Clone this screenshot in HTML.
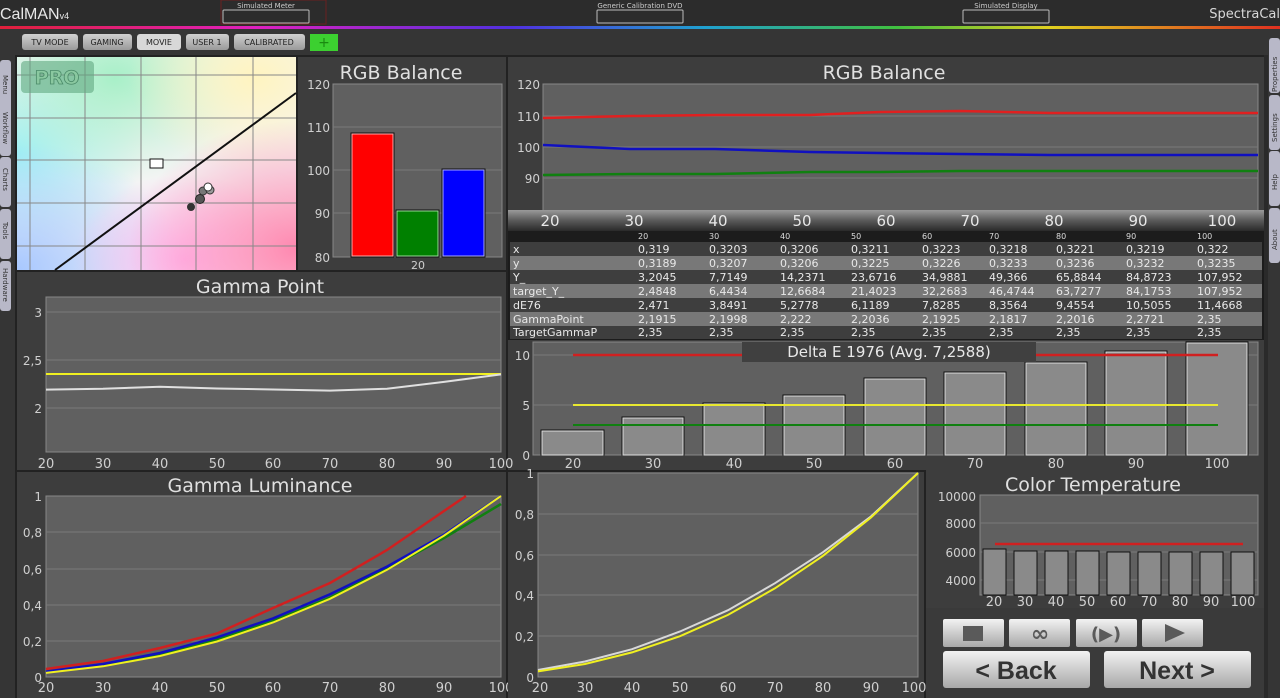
<!DOCTYPE html>
<html><head><meta charset="utf-8"><style>
html,body{margin:0;padding:0;background:#353535;width:1280px;height:698px;overflow:hidden;font-family:"Liberation Sans","DejaVu Sans",sans-serif}
svg{display:block}
</style></head><body>
<svg width="1280" height="698" viewBox="0 0 1280 698" xmlns="http://www.w3.org/2000/svg" font-family="DejaVu Sans, Liberation Sans, sans-serif">
<defs>
<linearGradient id="rainbow" x1="0" x2="1">
<stop offset="0" stop-color="#e0203a"/><stop offset="0.2" stop-color="#e020c0"/><stop offset="0.4" stop-color="#5030e0"/><stop offset="0.55" stop-color="#20a0d0"/><stop offset="0.7" stop-color="#40c040"/><stop offset="0.82" stop-color="#e0d020"/><stop offset="1" stop-color="#e03020"/></linearGradient>
<linearGradient id="hdr" x1="0" y1="0" x2="0" y2="1"><stop offset="0" stop-color="#9a9a9a"/><stop offset="0.5" stop-color="#5a5a5a"/><stop offset="1" stop-color="#2a2a2a"/></linearGradient>
<linearGradient id="btn" x1="0" y1="0" x2="0" y2="1"><stop offset="0" stop-color="#f2f2f2"/><stop offset="1" stop-color="#a8a8a8"/></linearGradient>
<linearGradient id="tab" x1="0" y1="0" x2="0" y2="1"><stop offset="0" stop-color="#d0d0d0"/><stop offset="1" stop-color="#9a9a9a"/></linearGradient>
<radialGradient id="g1" cx="0.35" cy="0.1" r="0.5"><stop offset="0" stop-color="#a8f0c8"/><stop offset="1" stop-color="#a8f0c8" stop-opacity="0"/></radialGradient>
<radialGradient id="g2" cx="0.85" cy="0.1" r="0.45"><stop offset="0" stop-color="#fff4c0"/><stop offset="1" stop-color="#fff4c0" stop-opacity="0"/></radialGradient>
<radialGradient id="g3" cx="1" cy="0.9" r="0.6"><stop offset="0" stop-color="#ff88b0"/><stop offset="1" stop-color="#ff88b0" stop-opacity="0"/></radialGradient>
<radialGradient id="g4" cx="0" cy="1" r="0.6"><stop offset="0" stop-color="#a8c8ff"/><stop offset="1" stop-color="#a8c8ff" stop-opacity="0"/></radialGradient>
<radialGradient id="g5" cx="0" cy="0.45" r="0.45"><stop offset="0" stop-color="#9ef0f4"/><stop offset="1" stop-color="#9ef0f4" stop-opacity="0"/></radialGradient>
<radialGradient id="g6" cx="0.6" cy="0.95" r="0.4"><stop offset="0" stop-color="#ffb8f0"/><stop offset="1" stop-color="#ffb8f0" stop-opacity="0"/></radialGradient>
</defs>

<!-- top bar -->
<rect x="0" y="0" width="1280" height="27" fill="#2c2c2c"/>
<rect x="0" y="26" width="1280" height="3" fill="url(#rainbow)"/>
<text x="0" y="19" font-size="16" fill="#e8e8e8" font-family="Liberation Sans, sans-serif">CalMAN<tspan font-size="9">v4</tspan></text>
<rect x="221" y="0" width="105" height="24" fill="none" stroke="#6a2020" stroke-width="1"/>
<text x="266" y="8" font-size="7" fill="#ccc" text-anchor="middle">Simulated Meter</text>
<rect x="223" y="10" width="86" height="13" fill="none" stroke="#bbb" rx="1"/>
<text x="640" y="8" font-size="7" fill="#ccc" text-anchor="middle">Generic Calibration DVD</text>
<rect x="597" y="10" width="86" height="13" fill="none" stroke="#bbb" rx="1"/>
<text x="1006" y="8" font-size="7" fill="#ccc" text-anchor="middle">Simulated Display</text>
<rect x="963" y="10" width="86" height="13" fill="none" stroke="#bbb" rx="1"/>
<text x="1280" y="18" font-size="13" fill="#d8d8d8" text-anchor="end">SpectraCal</text>

<!-- tabs -->
<g font-size="8" fill="#222" text-anchor="middle">
<rect x="22" y="34" width="56" height="16" rx="3" fill="url(#tab)"/><text x="50" y="45">TV MODE</text>
<rect x="83" y="34" width="49" height="16" rx="3" fill="url(#tab)"/><text x="107" y="45">GAMING</text>
<rect x="137" y="34" width="44" height="16" rx="3" fill="#d8d8d8"/><text x="159" y="45">MOVIE</text>
<rect x="186" y="34" width="43" height="16" rx="3" fill="url(#tab)"/><text x="207" y="45">USER 1</text>
<rect x="234" y="34" width="71" height="16" rx="3" fill="url(#tab)"/><text x="269" y="45">CALIBRATED</text>
</g>
<rect x="310" y="34" width="28" height="17" fill="#3cd030"/><text x="324" y="47" font-size="14" fill="#1a8a10" text-anchor="middle">+</text>

<!-- side tabs -->
<g fill="#b8b8c8">
<rect x="0" y="60" width="11" height="50" rx="3"/><rect x="0" y="104" width="11" height="52" rx="3"/><rect x="0" y="157" width="11" height="50" rx="3"/><rect x="0" y="209" width="11" height="50" rx="3"/><rect x="0" y="261" width="11" height="50" rx="3"/>
<rect x="1269" y="38" width="11" height="55" rx="3"/><rect x="1269" y="95" width="11" height="55" rx="3"/><rect x="1269" y="151" width="11" height="55" rx="3"/><rect x="1269" y="208" width="11" height="55" rx="3"/>
</g>
<g font-size="7" fill="#333">
<text transform="translate(3,75) rotate(90)">Menu</text><text transform="translate(3,112) rotate(90)">Workflow</text><text transform="translate(3,168) rotate(90)">Charts</text><text transform="translate(3,222) rotate(90)">Tools</text><text transform="translate(3,268) rotate(90)">Hardware</text>
<text transform="translate(1277,92) rotate(-90)">Properties</text><text transform="translate(1277,142) rotate(-90)">Settings</text><text transform="translate(1277,190) rotate(-90)">Help</text><text transform="translate(1277,250) rotate(-90)">About</text>
</g>

<!-- main panel bg -->
<rect x="15" y="55" width="1250" height="643" fill="#222"/>

<!-- CIE -->
<rect x="17" y="57" width="279" height="213" fill="#f4f4f4"/>
<rect x="17" y="57" width="279" height="213" fill="url(#g5)"/>
<rect x="17" y="57" width="279" height="213" fill="url(#g1)"/>
<rect x="17" y="57" width="279" height="213" fill="url(#g2)"/>
<rect x="17" y="57" width="279" height="213" fill="url(#g4)"/>
<rect x="17" y="57" width="279" height="213" fill="url(#g6)"/>
<rect x="17" y="57" width="279" height="213" fill="url(#g3)"/>
<g stroke="#888" stroke-width="1">
<line x1="30" y1="57" x2="30" y2="270"/><line x1="85" y1="57" x2="85" y2="270"/><line x1="141" y1="57" x2="141" y2="270"/><line x1="196" y1="57" x2="196" y2="270"/><line x1="253" y1="57" x2="253" y2="270"/>
<line x1="17" y1="75" x2="296" y2="75"/><line x1="17" y1="118" x2="296" y2="118"/><line x1="17" y1="160" x2="296" y2="160"/><line x1="17" y1="203" x2="296" y2="203"/><line x1="17" y1="246" x2="296" y2="246"/>
</g>
<rect x="21" y="61" width="73" height="32" rx="4" fill="#60a880" opacity="0.6"/>
<text x="57" y="84" font-size="19" font-weight="bold" fill="#8ac8a0" text-anchor="middle" stroke="#4a8a68" stroke-width="0.8">PRO</text>
<line x1="55" y1="270" x2="296" y2="93" stroke="#111" stroke-width="2"/>
<rect x="150" y="159" width="13" height="9" fill="#fff" stroke="#111"/>
<circle cx="191" cy="207" r="4" fill="#333"/><circle cx="200" cy="199" r="4.5" fill="#555" stroke="#222"/><circle cx="203" cy="191" r="4" fill="#777" stroke="#333"/><circle cx="210" cy="190" r="4" fill="#999" stroke="#333"/><circle cx="208" cy="187" r="4" fill="#fff" stroke="#333"/>

<!-- small RGB balance -->
<rect x="298" y="57" width="208" height="213" fill="#3d3d3d"/>
<text x="401" y="79" font-size="19" fill="#e0e0e0" text-anchor="middle">RGB Balance</text>
<rect x="333" y="84" width="169" height="173" fill="#606060" stroke="#888"/>
<g stroke="#7a7a7a"><line x1="333" y1="127" x2="502" y2="127"/><line x1="333" y1="170" x2="502" y2="170"/><line x1="333" y1="213" x2="502" y2="213"/></g>
<g font-size="12" fill="#d0d0d0" text-anchor="end"><text x="330" y="89">120</text><text x="330" y="132">110</text><text x="330" y="175">100</text><text x="330" y="218">90</text><text x="330" y="262">80</text></g>
<rect x="351" y="133" width="43" height="124" fill="#ff0000" stroke="#111"/><rect x="352" y="134" width="41" height="122" fill="none" stroke="#ffaaaa"/>
<rect x="396" y="210" width="43" height="47" fill="#008000" stroke="#111"/><rect x="397" y="211" width="41" height="45" fill="none" stroke="#99dd99"/>
<rect x="442" y="169" width="43" height="88" fill="#0000ff" stroke="#111"/><rect x="443" y="170" width="41" height="86" fill="none" stroke="#aaaaff"/>
<text x="418" y="269" font-size="11" fill="#d0d0d0" text-anchor="middle">20</text>

<!-- big RGB balance -->
<rect x="508" y="57" width="756" height="155" fill="#3d3d3d"/>
<text x="884" y="79" font-size="19" fill="#e0e0e0" text-anchor="middle">RGB Balance</text>
<rect x="543" y="84" width="715" height="128" fill="#606060" stroke="#888"/>
<g stroke="#7a7a7a"><line x1="543" y1="116" x2="1258" y2="116"/><line x1="543" y1="147" x2="1258" y2="147"/><line x1="543" y1="178" x2="1258" y2="178"/></g>
<g font-size="12" fill="#d0d0d0" text-anchor="end"><text x="540" y="89">120</text><text x="540" y="121">110</text><text x="540" y="152">100</text><text x="540" y="183">90</text></g>
<polyline fill="none" stroke="#e02020" stroke-width="2.5" points="543,118 630,116 715,115 810,115 880,112 960,111 1050,113 1258,113"/>
<polyline fill="none" stroke="#1010c0" stroke-width="2.5" points="543,145 630,149 715,149 810,152 880,153 960,154 1050,155 1258,155"/>
<polyline fill="none" stroke="#108010" stroke-width="2.5" points="543,175 630,174 715,174 810,172 880,172 960,171 1050,171 1258,171"/>
<rect x="508" y="210" width="756" height="21" fill="url(#hdr)"/>
<g font-size="15" fill="#e8e8e8" text-anchor="middle"><text x="550" y="226">20</text><text x="634" y="226">30</text><text x="718" y="226">40</text><text x="802" y="226">50</text><text x="886" y="226">60</text><text x="970" y="226">70</text><text x="1054" y="226">80</text><text x="1138" y="226">90</text><text x="1222" y="226">100</text></g>

<!-- table -->
<rect x="508" y="231" width="756" height="109" fill="#1c1c1c"/>
<rect x="510" y="242" width="752" height="14" fill="#3e3e3e"/>
<rect x="510" y="256" width="752" height="14" fill="#787878"/>
<rect x="510" y="270" width="752" height="14" fill="#3e3e3e"/>
<rect x="510" y="284" width="752" height="14" fill="#787878"/>
<rect x="510" y="298" width="752" height="14" fill="#3e3e3e"/>
<rect x="510" y="312" width="752" height="14" fill="#787878"/>
<rect x="510" y="326" width="752" height="13" fill="#3e3e3e"/>
<g font-size="8" fill="#ddd"><text x="638" y="239">20</text><text x="709" y="239">30</text><text x="780" y="239">40</text><text x="851" y="239">50</text><text x="922" y="239">60</text><text x="989" y="239">70</text><text x="1056" y="239">80</text><text x="1126" y="239">90</text><text x="1197" y="239">100</text></g>
<g font-size="11" fill="#e8e8e8">
<text x="513" y="253">x</text><text x="638" y="253">0,319</text><text x="709" y="253">0,3203</text><text x="780" y="253">0,3206</text><text x="851" y="253">0,3211</text><text x="922" y="253">0,3223</text><text x="989" y="253">0,3218</text><text x="1056" y="253">0,3221</text><text x="1126" y="253">0,3219</text><text x="1197" y="253">0,322</text>
<text x="513" y="267">y</text><text x="638" y="267">0,3189</text><text x="709" y="267">0,3207</text><text x="780" y="267">0,3206</text><text x="851" y="267">0,3225</text><text x="922" y="267">0,3226</text><text x="989" y="267">0,3233</text><text x="1056" y="267">0,3236</text><text x="1126" y="267">0,3232</text><text x="1197" y="267">0,3235</text>
<text x="513" y="281">Y_</text><text x="638" y="281">3,2045</text><text x="709" y="281">7,7149</text><text x="780" y="281">14,2371</text><text x="851" y="281">23,6716</text><text x="922" y="281">34,9881</text><text x="989" y="281">49,366</text><text x="1056" y="281">65,8844</text><text x="1126" y="281">84,8723</text><text x="1197" y="281">107,952</text>
<text x="513" y="295">target_Y_</text><text x="638" y="295">2,4848</text><text x="709" y="295">6,4434</text><text x="780" y="295">12,6684</text><text x="851" y="295">21,4023</text><text x="922" y="295">32,2683</text><text x="989" y="295">46,4744</text><text x="1056" y="295">63,7277</text><text x="1126" y="295">84,1753</text><text x="1197" y="295">107,952</text>
<text x="513" y="309">dE76</text><text x="638" y="309">2,471</text><text x="709" y="309">3,8491</text><text x="780" y="309">5,2778</text><text x="851" y="309">6,1189</text><text x="922" y="309">7,8285</text><text x="989" y="309">8,3564</text><text x="1056" y="309">9,4554</text><text x="1126" y="309">10,5055</text><text x="1197" y="309">11,4668</text>
<text x="513" y="323">GammaPoint</text><text x="638" y="323">2,1915</text><text x="709" y="323">2,1998</text><text x="780" y="323">2,222</text><text x="851" y="323">2,2036</text><text x="922" y="323">2,1925</text><text x="989" y="323">2,1817</text><text x="1056" y="323">2,2016</text><text x="1126" y="323">2,2721</text><text x="1197" y="323">2,35</text>
<text x="513" y="336">TargetGammaP</text><text x="638" y="336">2,35</text><text x="709" y="336">2,35</text><text x="780" y="336">2,35</text><text x="851" y="336">2,35</text><text x="922" y="336">2,35</text><text x="989" y="336">2,35</text><text x="1056" y="336">2,35</text><text x="1126" y="336">2,35</text><text x="1197" y="336">2,35</text>
</g>

<!-- Delta E -->
<rect x="508" y="340" width="756" height="130" fill="#3d3d3d"/>
<rect x="533" y="342" width="725" height="113" fill="#606060" stroke="#888"/>
<g stroke="#7a7a7a"><line x1="533" y1="355" x2="1258" y2="355"/><line x1="533" y1="405" x2="1258" y2="405"/></g>
<g font-size="12" fill="#d0d0d0" text-anchor="end"><text x="530" y="360">10</text><text x="530" y="410">5</text><text x="530" y="460">0</text></g>
<g fill="#8a8a8a" stroke="#111">
<rect x="541" y="430" width="63" height="25"/><rect x="622" y="417" width="62" height="38"/><rect x="703" y="403" width="62" height="52"/><rect x="783" y="395" width="62" height="60"/><rect x="864" y="378" width="62" height="77"/><rect x="944" y="372" width="62" height="83"/><rect x="1025" y="362" width="62" height="93"/><rect x="1105" y="351" width="62" height="104"/><rect x="1186" y="342" width="62" height="113"/>
</g>
<g fill="none" stroke="#ddd"><rect x="542" y="431" width="61" height="24"/><rect x="623" y="418" width="60" height="37"/><rect x="704" y="404" width="60" height="51"/><rect x="784" y="396" width="60" height="59"/><rect x="865" y="379" width="60" height="76"/><rect x="945" y="373" width="60" height="82"/><rect x="1026" y="363" width="60" height="92"/><rect x="1106" y="352" width="60" height="103"/><rect x="1187" y="343" width="60" height="112"/></g>
<line x1="573" y1="355" x2="1218" y2="355" stroke="#d02020" stroke-width="2.5"/>
<line x1="573" y1="405" x2="1218" y2="405" stroke="#e8e830" stroke-width="2"/>
<line x1="573" y1="425" x2="1218" y2="425" stroke="#108010" stroke-width="2"/>
<rect x="742" y="342" width="294" height="20" fill="#404040"/>
<text x="889" y="357" font-size="15" fill="#e8e8e8" text-anchor="middle">Delta E 1976 (Avg. 7,2588)</text>
<g font-size="13" fill="#d0d0d0" text-anchor="middle"><text x="573" y="468">20</text><text x="653" y="468">30</text><text x="734" y="468">40</text><text x="814" y="468">50</text><text x="895" y="468">60</text><text x="975" y="468">70</text><text x="1056" y="468">80</text><text x="1136" y="468">90</text><text x="1217" y="468">100</text></g>

<!-- Gamma Point -->
<rect x="17" y="272" width="489" height="198" fill="#3d3d3d"/>
<text x="260" y="293" font-size="19" fill="#e0e0e0" text-anchor="middle">Gamma Point</text>
<rect x="46" y="297" width="455" height="155" fill="#606060" stroke="#888"/>
<g stroke="#7a7a7a"><line x1="46" y1="312" x2="501" y2="312"/><line x1="46" y1="360" x2="501" y2="360"/><line x1="46" y1="408" x2="501" y2="408"/></g>
<g font-size="12" fill="#d0d0d0" text-anchor="end"><text x="42" y="317">3</text><text x="42" y="365">2,5</text><text x="42" y="413">2</text></g>
<line x1="46" y1="374" x2="501" y2="374" stroke="#f0f020" stroke-width="2"/>
<polyline fill="none" stroke="#e0e0e0" stroke-width="2" points="46,389.6 103,388.8 160,386.7 217,388.5 273,389.5 330,390.6 387,388.7 444,381.9 501,374.4"/>
<g font-size="13" fill="#d0d0d0" text-anchor="middle"><text x="46" y="468">20</text><text x="103" y="468">30</text><text x="160" y="468">40</text><text x="217" y="468">50</text><text x="273" y="468">60</text><text x="330" y="468">70</text><text x="387" y="468">80</text><text x="444" y="468">90</text><text x="501" y="468">100</text></g>

<!-- Gamma Luminance -->
<rect x="17" y="472" width="489" height="226" fill="#3d3d3d"/>
<text x="260" y="492" font-size="19" fill="#e0e0e0" text-anchor="middle">Gamma Luminance</text>
<rect x="46" y="496" width="455" height="181" fill="#606060" stroke="#888"/>
<g stroke="#7a7a7a"><line x1="46" y1="532" x2="501" y2="532"/><line x1="46" y1="569" x2="501" y2="569"/><line x1="46" y1="605" x2="501" y2="605"/><line x1="46" y1="641" x2="501" y2="641"/></g>
<g font-size="12" fill="#d0d0d0" text-anchor="end"><text x="42" y="501">1</text><text x="42" y="537">0,8</text><text x="42" y="574">0,6</text><text x="42" y="610">0,4</text><text x="42" y="646">0,2</text><text x="42" y="682">0</text></g>
<polyline fill="none" stroke="#d02020" stroke-width="2.5" points="46,669 103,661 160,648 217,633.5 273,608 330,583 387,550 444,511 466,496"/>
<polyline fill="none" stroke="#108010" stroke-width="2.5" points="46,672 103,665 160,655 217,639.5 273,621 330,597.5 387,569 444,538 501,504"/>
<polyline fill="none" stroke="#1010c0" stroke-width="2.5" points="46,671.6 103,664 160,653 217,637.4 273,618.4 330,594.3 387,566.6 444,534.7 501,496"/>
<polyline fill="none" stroke="#f0f020" stroke-width="2" points="46,672.9 103,666.3 160,656 217,641.5 273,622.5 330,598.8 387,569.8 444,535.6 501,496"/>
<g font-size="13" fill="#d0d0d0" text-anchor="middle"><text x="46" y="692">20</text><text x="103" y="692">30</text><text x="160" y="692">40</text><text x="217" y="692">50</text><text x="273" y="692">60</text><text x="330" y="692">70</text><text x="387" y="692">80</text><text x="444" y="692">90</text><text x="501" y="692">100</text></g>

<!-- middle luminance -->
<rect x="508" y="472" width="416" height="226" fill="#3d3d3d"/>
<rect x="538" y="473" width="380" height="204" fill="#606060" stroke="#888"/>
<g stroke="#7a7a7a"><line x1="538" y1="514" x2="918" y2="514"/><line x1="538" y1="555" x2="918" y2="555"/><line x1="538" y1="595" x2="918" y2="595"/><line x1="538" y1="636" x2="918" y2="636"/></g>
<g font-size="12" fill="#d0d0d0" text-anchor="end"><text x="534" y="478">1</text><text x="534" y="519">0,8</text><text x="534" y="560">0,6</text><text x="534" y="600">0,4</text><text x="534" y="641">0,2</text><text x="534" y="682">0</text></g>
<polyline fill="none" stroke="#d8d8d8" stroke-width="2" points="538,670 585,661.5 632,649.2 680,631.5 728,610.2 775,583.2 823,552.2 871,516.4 918,473"/>
<polyline fill="none" stroke="#f0f020" stroke-width="2" points="538,671.4 585,664 632,652.4 680,636.2 728,614.9 775,588.3 823,555.8 871,517.5 918,473"/>
<g font-size="13" fill="#d0d0d0" text-anchor="middle"><text x="540" y="692">20</text><text x="585" y="692">30</text><text x="632" y="692">40</text><text x="680" y="692">50</text><text x="728" y="692">60</text><text x="775" y="692">70</text><text x="823" y="692">80</text><text x="871" y="692">90</text><text x="914" y="692">100</text></g>

<!-- Color Temperature -->
<rect x="926" y="470" width="338" height="138" fill="#3d3d3d"/>
<text x="1093" y="491" font-size="19" fill="#e0e0e0" text-anchor="middle">Color Temperature</text>
<rect x="980" y="495" width="278" height="100" fill="#606060" stroke="#888"/>
<g stroke="#7a7a7a"><line x1="980" y1="523" x2="1258" y2="523"/><line x1="980" y1="552" x2="1258" y2="552"/><line x1="980" y1="580" x2="1258" y2="580"/></g>
<g font-size="12" fill="#d0d0d0" text-anchor="end"><text x="976" y="501">10000</text><text x="976" y="528">8000</text><text x="976" y="557">6000</text><text x="976" y="585">4000</text></g>
<g fill="#8a8a8a" stroke="#111">
<rect x="983" y="549" width="23" height="46"/><rect x="1014" y="551" width="23" height="44"/><rect x="1045" y="551" width="23" height="44"/><rect x="1076" y="551" width="23" height="44"/><rect x="1107" y="552" width="23" height="43"/><rect x="1138" y="552" width="23" height="43"/><rect x="1169" y="552" width="23" height="43"/><rect x="1200" y="552" width="23" height="43"/><rect x="1231" y="552" width="23" height="43"/>
</g>
<line x1="995" y1="544" x2="1243" y2="544" stroke="#d02020" stroke-width="2.5"/>
<g font-size="13" fill="#d0d0d0" text-anchor="middle"><text x="994" y="606">20</text><text x="1025" y="606">30</text><text x="1056" y="606">40</text><text x="1087" y="606">50</text><text x="1118" y="606">60</text><text x="1149" y="606">70</text><text x="1180" y="606">80</text><text x="1211" y="606">90</text><text x="1243" y="606">100</text></g>

<!-- control buttons -->
<rect x="926" y="608" width="338" height="90" fill="#3a3a3a"/>
<rect x="943" y="619" width="61" height="28" rx="2" fill="url(#btn)"/><rect x="963" y="626" width="20" height="15" fill="#5a5a5a"/>
<rect x="1009" y="619" width="61" height="28" rx="2" fill="url(#btn)"/><text x="1040" y="641" font-size="22" font-weight="bold" fill="#5a5a5a" text-anchor="middle">∞</text>
<rect x="1076" y="619" width="61" height="28" rx="2" fill="url(#btn)"/><text x="1106" y="640" font-size="18" font-weight="bold" fill="#5a5a5a" text-anchor="middle">(▶)</text>
<rect x="1142" y="619" width="61" height="28" rx="2" fill="url(#btn)"/><path d="M1165 624 L1185 633 L1165 642 Z" fill="#5a5a5a"/>
<rect x="943" y="651" width="147" height="37" rx="3" fill="url(#btn)"/><text x="1016" y="679" font-size="25" font-weight="bold" fill="#333" text-anchor="middle" font-family="Liberation Sans, sans-serif">&lt; Back</text>
<rect x="1104" y="651" width="147" height="37" rx="3" fill="url(#btn)"/><text x="1177" y="679" font-size="25" font-weight="bold" fill="#333" text-anchor="middle" font-family="Liberation Sans, sans-serif">Next &gt;</text>
<rect x="1264" y="55" width="4" height="643" fill="#2a2a2a"/>
</svg>
</body></html>
